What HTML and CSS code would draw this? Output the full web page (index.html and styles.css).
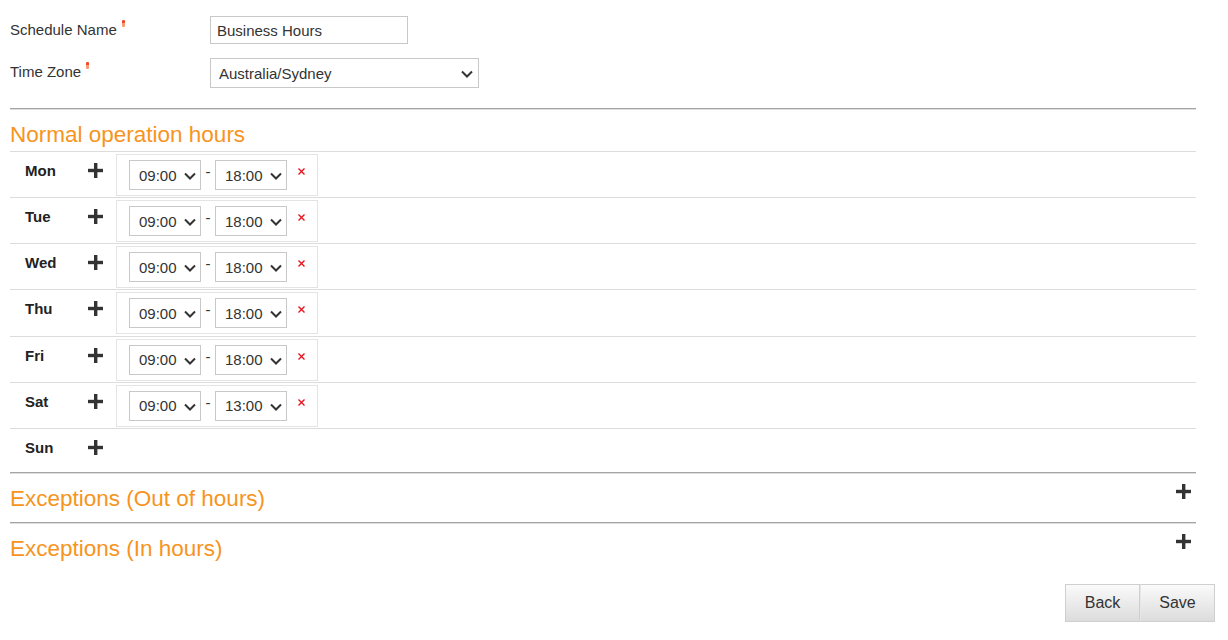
FILE: index.html
```html
<!DOCTYPE html>
<html>
<head>
<meta charset="utf-8">
<link rel="stylesheet" href="styles.css">
</head>
<body>
<div class="page">
  <div class="form-row">
    <label class="form-label">Schedule Name<span class="req"></span></label>
    <input class="text-input" type="text" value="Business Hours">
  </div>
  <div class="form-row form-row-tz">
    <label class="form-label">Time Zone<span class="req"></span></label>
    <span class="select-wrap">
      <select class="tz-select"><option>Australia/Sydney</option></select>
      <svg class="chev chev-tz" width="12" height="8" viewBox="0 0 12 8"><path d="M1 1.5L6 6.5L11 1.5"/></svg>
    </span>
  </div>

  <hr class="rule rule-first">
  <h2 class="section-title">Normal operation hours</h2>
  <div class="days">
    <div class="day-row">
      <span class="day">Mon</span>
      <svg class="plus" width="15" height="15" viewBox="0 0 15 15"><rect x="6" y="0" width="3.4" height="15"/><rect x="0" y="5.8" width="15" height="3.4"/></svg>
      <div class="slot">
        <span class="select-wrap"><select class="time"><option>09:00</option></select><svg class="chev" width="12" height="8" viewBox="0 0 12 8"><path d="M1 1.5L6 6.5L11 1.5"/></svg></span>
        <span class="dash">-</span>
        <span class="select-wrap"><select class="time"><option>18:00</option></select><svg class="chev" width="12" height="8" viewBox="0 0 12 8"><path d="M1 1.5L6 6.5L11 1.5"/></svg></span>
        <svg class="remove" width="7" height="7" viewBox="0 0 7 7"><path d="M0.5 0.5L6.5 6.5M6.5 0.5L0.5 6.5"/></svg>
      </div>
    </div>
    <div class="day-row">
      <span class="day">Tue</span>
      <svg class="plus" width="15" height="15" viewBox="0 0 15 15"><rect x="6" y="0" width="3.4" height="15"/><rect x="0" y="5.8" width="15" height="3.4"/></svg>
      <div class="slot">
        <span class="select-wrap"><select class="time"><option>09:00</option></select><svg class="chev" width="12" height="8" viewBox="0 0 12 8"><path d="M1 1.5L6 6.5L11 1.5"/></svg></span>
        <span class="dash">-</span>
        <span class="select-wrap"><select class="time"><option>18:00</option></select><svg class="chev" width="12" height="8" viewBox="0 0 12 8"><path d="M1 1.5L6 6.5L11 1.5"/></svg></span>
        <svg class="remove" width="7" height="7" viewBox="0 0 7 7"><path d="M0.5 0.5L6.5 6.5M6.5 0.5L0.5 6.5"/></svg>
      </div>
    </div>
    <div class="day-row">
      <span class="day">Wed</span>
      <svg class="plus" width="15" height="15" viewBox="0 0 15 15"><rect x="6" y="0" width="3.4" height="15"/><rect x="0" y="5.8" width="15" height="3.4"/></svg>
      <div class="slot">
        <span class="select-wrap"><select class="time"><option>09:00</option></select><svg class="chev" width="12" height="8" viewBox="0 0 12 8"><path d="M1 1.5L6 6.5L11 1.5"/></svg></span>
        <span class="dash">-</span>
        <span class="select-wrap"><select class="time"><option>18:00</option></select><svg class="chev" width="12" height="8" viewBox="0 0 12 8"><path d="M1 1.5L6 6.5L11 1.5"/></svg></span>
        <svg class="remove" width="7" height="7" viewBox="0 0 7 7"><path d="M0.5 0.5L6.5 6.5M6.5 0.5L0.5 6.5"/></svg>
      </div>
    </div>
    <div class="day-row">
      <span class="day">Thu</span>
      <svg class="plus" width="15" height="15" viewBox="0 0 15 15"><rect x="6" y="0" width="3.4" height="15"/><rect x="0" y="5.8" width="15" height="3.4"/></svg>
      <div class="slot">
        <span class="select-wrap"><select class="time"><option>09:00</option></select><svg class="chev" width="12" height="8" viewBox="0 0 12 8"><path d="M1 1.5L6 6.5L11 1.5"/></svg></span>
        <span class="dash">-</span>
        <span class="select-wrap"><select class="time"><option>18:00</option></select><svg class="chev" width="12" height="8" viewBox="0 0 12 8"><path d="M1 1.5L6 6.5L11 1.5"/></svg></span>
        <svg class="remove" width="7" height="7" viewBox="0 0 7 7"><path d="M0.5 0.5L6.5 6.5M6.5 0.5L0.5 6.5"/></svg>
      </div>
    </div>
    <div class="day-row">
      <span class="day">Fri</span>
      <svg class="plus" width="15" height="15" viewBox="0 0 15 15"><rect x="6" y="0" width="3.4" height="15"/><rect x="0" y="5.8" width="15" height="3.4"/></svg>
      <div class="slot">
        <span class="select-wrap"><select class="time"><option>09:00</option></select><svg class="chev" width="12" height="8" viewBox="0 0 12 8"><path d="M1 1.5L6 6.5L11 1.5"/></svg></span>
        <span class="dash">-</span>
        <span class="select-wrap"><select class="time"><option>18:00</option></select><svg class="chev" width="12" height="8" viewBox="0 0 12 8"><path d="M1 1.5L6 6.5L11 1.5"/></svg></span>
        <svg class="remove" width="7" height="7" viewBox="0 0 7 7"><path d="M0.5 0.5L6.5 6.5M6.5 0.5L0.5 6.5"/></svg>
      </div>
    </div>
    <div class="day-row">
      <span class="day">Sat</span>
      <svg class="plus" width="15" height="15" viewBox="0 0 15 15"><rect x="6" y="0" width="3.4" height="15"/><rect x="0" y="5.8" width="15" height="3.4"/></svg>
      <div class="slot">
        <span class="select-wrap"><select class="time"><option>09:00</option></select><svg class="chev" width="12" height="8" viewBox="0 0 12 8"><path d="M1 1.5L6 6.5L11 1.5"/></svg></span>
        <span class="dash">-</span>
        <span class="select-wrap"><select class="time"><option>13:00</option></select><svg class="chev" width="12" height="8" viewBox="0 0 12 8"><path d="M1 1.5L6 6.5L11 1.5"/></svg></span>
        <svg class="remove" width="7" height="7" viewBox="0 0 7 7"><path d="M0.5 0.5L6.5 6.5M6.5 0.5L0.5 6.5"/></svg>
      </div>
    </div>
    <div class="day-row day-row-empty">
      <span class="day">Sun</span>
      <svg class="plus" width="15" height="15" viewBox="0 0 15 15"><rect x="6" y="0" width="3.4" height="15"/><rect x="0" y="5.8" width="15" height="3.4"/></svg>
    </div>
  </div>

  <hr class="rule">
  <div class="section-head">
    <h2 class="section-title">Exceptions (Out of hours)</h2>
    <svg class="plus plus-right" width="15" height="15" viewBox="0 0 15 15"><rect x="6" y="0" width="3.4" height="15"/><rect x="0" y="5.8" width="15" height="3.4"/></svg>
  </div>
  <hr class="rule">
  <div class="section-head">
    <h2 class="section-title">Exceptions (In hours)</h2>
    <svg class="plus plus-right" width="15" height="15" viewBox="0 0 15 15"><rect x="6" y="0" width="3.4" height="15"/><rect x="0" y="5.8" width="15" height="3.4"/></svg>
  </div>

  <div class="actions">
    <button class="btn" type="button">Back</button>
    <button class="btn" type="button">Save</button>
  </div>
</div>
</body>
</html>
```

FILE: styles.css
```css
* { box-sizing: border-box; }

html, body {
  margin: 0;
  padding: 0;
  background: #fff;
}

body {
  font-family: "Liberation Sans", Arial, sans-serif;
  font-size: 15px;
  color: #333;
}

.page {
  width: 1216px;
  padding: 16px 0 0 10px;
}

.form-row {
  display: flex;
  align-items: flex-start;
}

.form-row-tz {
  margin-top: 14px;
}

.form-label {
  width: 200px;
  padding-top: 4px;
  line-height: 20px;
  font-size: 15px;
  color: #333;
}

.req {
  display: inline-block;
  width: 3px;
  height: 7px;
  margin-left: 5px;
  vertical-align: top;
  background: linear-gradient(#ef4b26 0 45%, #f79b74 45% 100%);
  border-radius: 1px;
}

.text-input {
  width: 198px;
  height: 28px;
  border: 1px solid #c8c8c8;
  padding: 0 6px;
  font-family: "Liberation Sans", Arial, sans-serif;
  font-size: 15px;
  color: #333;
  outline: none;
}

.select-wrap {
  position: relative;
  display: block;
  flex: none;
}

.chev {
  position: absolute;
  right: 5px;
  top: 12px;
  fill: none;
  stroke: #333;
  stroke-width: 2;
  pointer-events: none;
}

.chev-tz {
  right: 6px;
  top: 12px;
}

.tz-select,
.time {
  display: block;
  -webkit-appearance: none;
  appearance: none;
  border: 1px solid #c8c8c8;
  border-radius: 0;
  background: #fff;
  font-family: "Liberation Sans", Arial, sans-serif;
  font-size: 15px;
  color: #333;
  height: 30px;
  margin: 0;
}

.tz-select {
  width: 269px;
  padding: 0 24px 0 8px;
}

.time {
  width: 72px;
  padding: 0 20px 0 9px;
}

.rule {
  width: 1186px;
  height: 0;
  margin: 0;
  border: 0;
  border-top: 1px solid #a4a4a4;
  border-bottom: 1px solid #dedede;
}

.rule-first {
  margin-top: 20px;
}

.section-title {
  margin: 0;
  padding-top: 8px;
  line-height: 33px;
  font-size: 22.5px;
  font-weight: normal;
  color: #f7941d;
}

.days {
  width: 1186px;
}

.day-row {
  display: flex;
  align-items: flex-start;
  height: 46.17px;
  border-top: 1px solid #dcdcdc;
  padding-left: 15px;
}

.day-row-empty {
  height: 44px;
}

.day {
  width: 63px;
  padding-top: 9px;
  line-height: 20px;
  font-weight: bold;
  font-size: 15px;
  color: #222;
}

.plus {
  display: block;
  fill: #333;
  margin-top: 11px;
  flex: none;
}

.slot {
  display: flex;
  align-items: flex-start;
  margin-left: 13px;
  margin-top: 2px;
  width: 202px;
  height: 42px;
  border: 1px solid #e4e4e4;
  padding: 5px 0 0 12px;
}

.dash {
  width: 14px;
  text-align: center;
  line-height: 24px;
  font-size: 15px;
  color: #333;
}

.remove {
  display: block;
  margin-left: 11px;
  margin-top: 8px;
  stroke: #e8141c;
  stroke-width: 1.4;
  fill: none;
}

.section-head {
  display: flex;
  justify-content: space-between;
  align-items: flex-start;
  width: 1186px;
  height: 48px;
}

.plus-right {
  margin-top: 10px;
  margin-right: 5px;
}

.actions {
  display: flex;
  justify-content: flex-end;
  margin-top: 12px;
  padding-right: 1px;
}

.btn {
  width: 75px;
  height: 38px;
  border: 1px solid #cfcfcf;
  border-radius: 0;
  margin: 0;
  background: linear-gradient(#fafafa, #dcdcdc);
  font-family: "Liberation Sans", Arial, sans-serif;
  font-size: 16px;
  color: #333;
  padding: 0;
}

.btn + .btn {
  border-left: 1px solid #e6e6e6;
}
```
